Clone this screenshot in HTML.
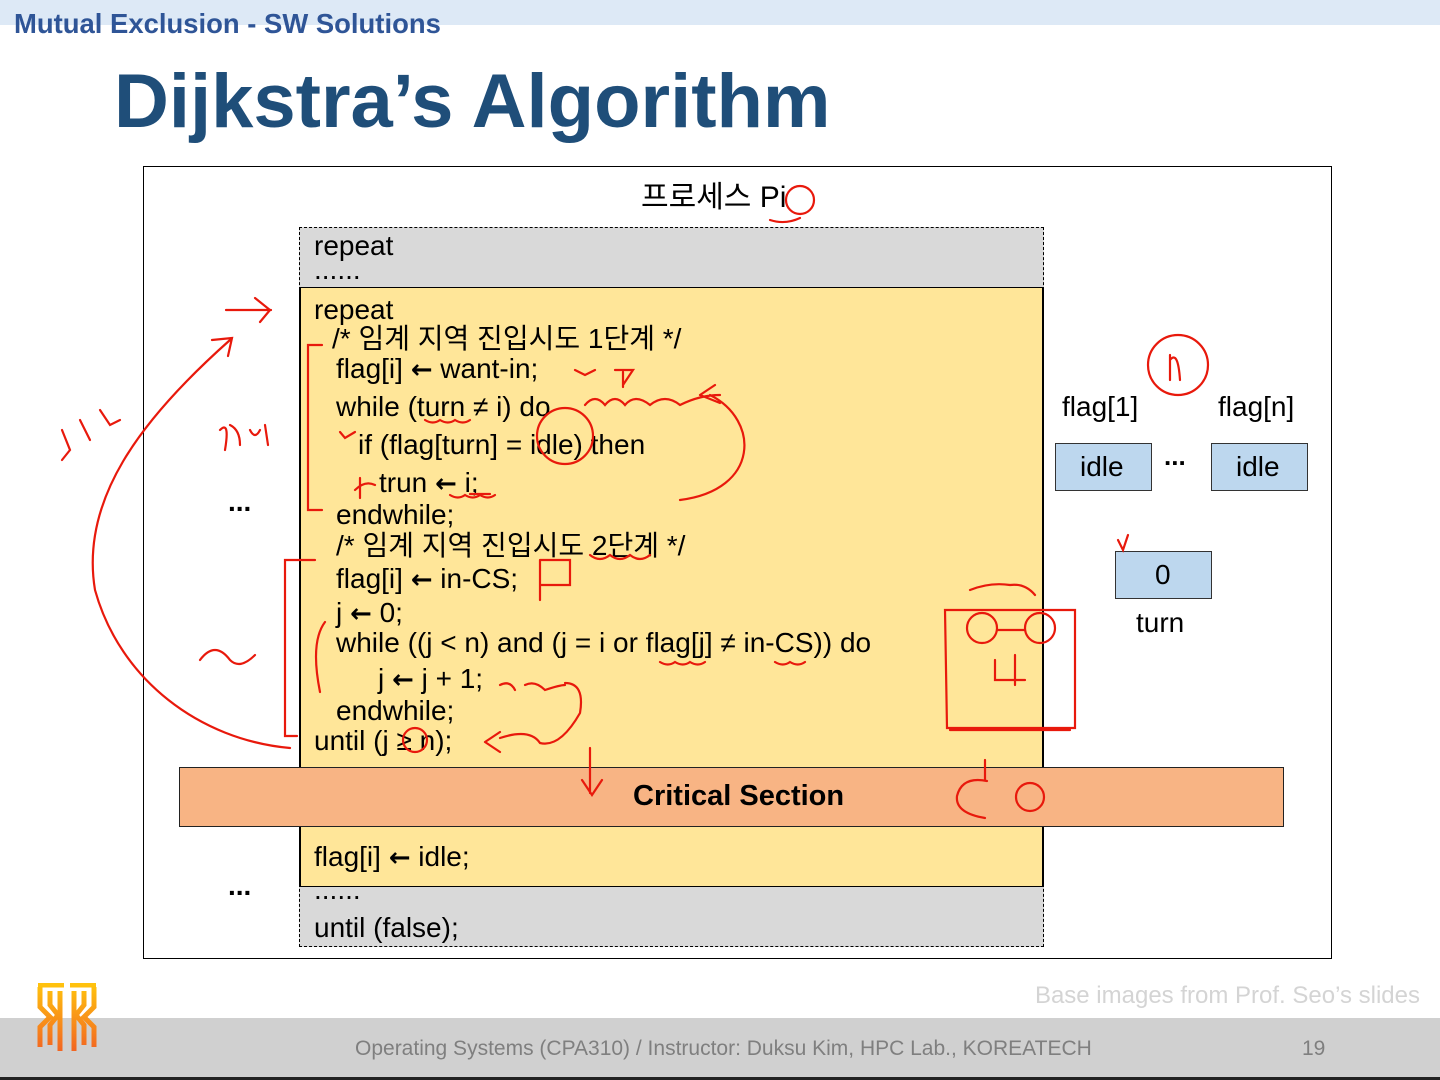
<!DOCTYPE html>
<html><head><meta charset="utf-8"><style>
*{margin:0;padding:0}
body{width:1440px;height:1080px;position:relative;background:#fff;overflow:hidden;font-family:"Liberation Sans","Noto Sans CJK KR",sans-serif}
.a{position:absolute;white-space:nowrap;line-height:1}
.c{font-size:28px;color:#000}
.ar{font-family:"DejaVu Sans",sans-serif;font-weight:bold;font-size:26px}
.box{position:absolute;box-sizing:border-box}
</style></head><body>
<div class="box" style="left:0;top:0;width:1440px;height:25px;background:#dde9f6"></div>
<div class="a" style="left:14px;top:10px;font-size:28px;font-weight:bold;color:#2f5597;transform:scaleX(.98);transform-origin:0 0">Mutual Exclusion - SW Solutions</div>
<div class="a" style="left:114px;top:64px;font-size:76px;font-weight:bold;color:#1f4e79;transform:scaleX(1.0);transform-origin:0 0">Dijkstra’s Algorithm</div>

<div class="box" style="left:143px;top:166px;width:1189px;height:793px;border:1.5px solid #000"></div>
<div class="box" style="left:299px;top:227px;width:745px;height:720px;background:#d9d9d9;border:1.5px dashed #000"></div>
<div class="box" style="left:300px;top:287px;width:743px;height:480px;background:#ffe699;border-top:1px solid #000"></div>
<div class="box" style="left:300px;top:826px;width:743px;height:61px;background:#ffe699;border-bottom:1px solid #000"></div>
<div class="box" style="left:299px;top:287px;width:1.5px;height:600px;background:#000"></div>
<div class="box" style="left:1042px;top:287px;width:1.5px;height:600px;background:#000"></div>
<div class="box" style="left:179px;top:767px;width:1105px;height:60px;background:#f8b484;border:1.5px solid #222"></div>
<div class="a" style="left:633px;top:782px;font-size:29px;font-weight:bold">Critical Section</div>

<div class="a c" style="left:641px;top:183px;font-size:30px">프로세스 Pi</div>
<div class="a c" style="left:314px;top:232px">repeat</div>
<div class="a c" style="left:314px;top:256px">......</div>
<div class="a c" style="left:314px;top:296px">repeat</div>
<div class="a c" style="left:332px;top:325px">/* 임계 지역 진입시도 1단계 */</div>
<div class="a c" style="left:336px;top:355px">flag[i] <span class="ar">←</span> want-in;</div>
<div class="a c" style="left:336px;top:393px">while (turn ≠ i) do</div>
<div class="a c" style="left:358px;top:431px">if (flag[turn] = idle) then</div>
<div class="a c" style="left:379px;top:469px">trun <span class="ar">←</span> i;</div>
<div class="a c" style="left:336px;top:501px">endwhile;</div>
<div class="a c" style="left:336px;top:532px">/* 임계 지역 진입시도 2단계 */</div>
<div class="a c" style="left:336px;top:565px">flag[i] <span class="ar">←</span> in-CS;</div>
<div class="a c" style="left:336px;top:599px">j <span class="ar">←</span> 0;</div>
<div class="a c" style="left:336px;top:629px">while ((j &lt; n) and (j = i or flag[j] ≠ in-CS)) do</div>
<div class="a c" style="left:378px;top:665px">j <span class="ar">←</span> j + 1;</div>
<div class="a c" style="left:336px;top:697px">endwhile;</div>
<div class="a c" style="left:314px;top:727px">until (j ≥ n);</div>
<div class="a c" style="left:314px;top:843px">flag[i] <span class="ar">←</span> idle;</div>
<div class="a c" style="left:314px;top:876px">......</div>
<div class="a c" style="left:314px;top:914px">until (false);</div>
<div class="a" style="left:228px;top:488px;font-size:28px;font-weight:bold">...</div>
<div class="a" style="left:228px;top:872px;font-size:28px;font-weight:bold">...</div>

<div class="a c" style="left:1062px;top:393px">flag[1]</div>
<div class="a c" style="left:1218px;top:393px">flag[n]</div>
<div class="box" style="left:1055px;top:443px;width:97px;height:48px;background:#bdd7ee;border:1.5px solid #333"></div>
<div class="box" style="left:1211px;top:443px;width:97px;height:48px;background:#bdd7ee;border:1.5px solid #333"></div>
<div class="box" style="left:1115px;top:551px;width:97px;height:48px;background:#bdd7ee;border:1.5px solid #333"></div>
<div class="a c" style="left:1080px;top:453px">idle</div>
<div class="a c" style="left:1236px;top:453px">idle</div>
<div class="a" style="left:1164px;top:443px;font-size:26px;font-weight:bold">...</div>
<div class="a c" style="left:1155px;top:561px">0</div>
<div class="a c" style="left:1136px;top:609px">turn</div>

<svg class="a" style="left:0;top:0" width="1440" height="1080" fill="none" stroke="#e8190c" stroke-width="2.2" stroke-linecap="round">
<circle cx="800" cy="200" r="14"/>
<path d="M770 220 q15 5 30 -2"/>
<path d="M226 310 h45 M255 298 l15 12 l-10 12"/>
<path d="M290 748 C200 740 120 680 95 590 C80 500 140 420 230 340 M212 340 l20 -2 l-4 18"/>
<path d="M62 430 l8 20 l-8 10 M80 420 l10 20 M100 410 l10 15 l10 -5"/>
<path d="M220 430 q10 -10 5 20 M230 425 q10 5 10 20 M250 430 q5 10 10 0 M265 425 l3 20"/>
<path d="M200 660 q15 -20 30 0 q10 10 25 -5"/>
<path d="M322 345 h-14 v165 h14"/>
<path d="M315 560 h-30 v176 h12"/>
<path d="M325 622 q-15 20 -5 70"/>
<circle cx="1178" cy="365" r="30"/>
<path d="M1170 355 v25 M1170 360 q8 -10 10 20"/>
<circle cx="565" cy="436" r="28"/>
<path d="M680 500 C760 490 760 420 710 395 M585 405 q10 -12 20 0 q10 -12 20 0 q10 -12 25 0 q15 -12 30 0 q20 -10 40 -10 M700 395 l15 -10 M700 395 l20 8"/>
<path d="M575 370 l10 5 l10 -5 M615 370 h18 l-10 15 M623 372 v15"/>
<path d="M540 560 v40 M540 560 h30 v25 h-30"/>
<path d="M945 610 h130 v118 h-128 z M950 730 h120"/>
<circle cx="982" cy="628" r="15"/>
<circle cx="1040" cy="628" r="15"/>
<path d="M997 630 h28 M995 660 v20 h30 M1015 655 v30 M970 590 q20 -8 40 -5 q15 -2 25 10"/>
<path d="M415 740 m-12 0 a12 12 0 1 0 24 0 a12 12 0 1 0 -24 0"/>
<path d="M485 742 l15 -10 M485 742 l15 10 M500 738 q30 -10 40 5 q20 5 40 -30 q5 -30 -15 -30"/>
<path d="M500 685 q10 -5 15 5 M525 685 q10 -5 20 5 q15 -5 20 -5"/>
<path d="M590 748 v45 M582 780 l10 15 l10 -15"/>
<path d="M985 818 q-30 -5 -28 -22 q5 -20 30 -15 M985 760 v20"/>
<circle cx="1030" cy="797" r="14"/>
<path d="M1118 540 l5 10 l5 -15"/>
<path d="M340 432 l5 6 l10 -6"/>
<path d="M355 490 q10 -10 20 -5 M360 478 v20 M470 494 h20"/>
<path d="M425 420 q8 5 15 0 q8 5 15 0 q8 5 15 0"/>
<path d="M450 495 q8 5 15 0 q8 5 15 0 q8 5 15 0"/>
<path d="M590 555 q10 8 20 0 q10 8 20 0 q10 8 20 0"/>
<path d="M660 662 q8 5 15 0 q8 5 15 0 q8 5 15 0 M775 662 q8 5 15 0 q8 5 15 0"/>
</svg>

<div class="a" style="right:20px;top:984px;font-size:24px;color:#d4d4d4">Base images from Prof. Seo’s slides</div>
<div class="box" style="left:0;top:1018px;width:1440px;height:59px;background:#d0d0d0"></div>
<div class="box" style="left:0;top:1077px;width:1440px;height:3px;background:#222"></div>
<div class="a" style="left:355px;top:1038px;font-size:21px;color:#7f7f7f">Operating Systems (CPA310) / Instructor: Duksu Kim, HPC Lab., KOREATECH</div>
<div class="a" style="left:1302px;top:1038px;font-size:21px;color:#7f7f7f">19</div>
<svg class="a" style="left:36px;top:983px" width="62" height="76" fill="none" stroke="#f7931e" stroke-width="5">
<defs><linearGradient id="g" x1="0" y1="0" x2="0" y2="1"><stop offset="0" stop-color="#ffc20e"/><stop offset="1" stop-color="#f26522"/></linearGradient></defs>
<g stroke="url(#g)">
<path d="M2 2 h26 M34 2 h26 M4 4 v20 l10 10 l-10 10 v20 M14 8 v14 l8 10 l-8 10 v20 M24 8 v60 M38 8 v60 M48 8 v14 l-8 10 l8 10 v20 M58 4 v20 l-10 10 l10 10 v20"/>
</g></svg>
</body></html>
